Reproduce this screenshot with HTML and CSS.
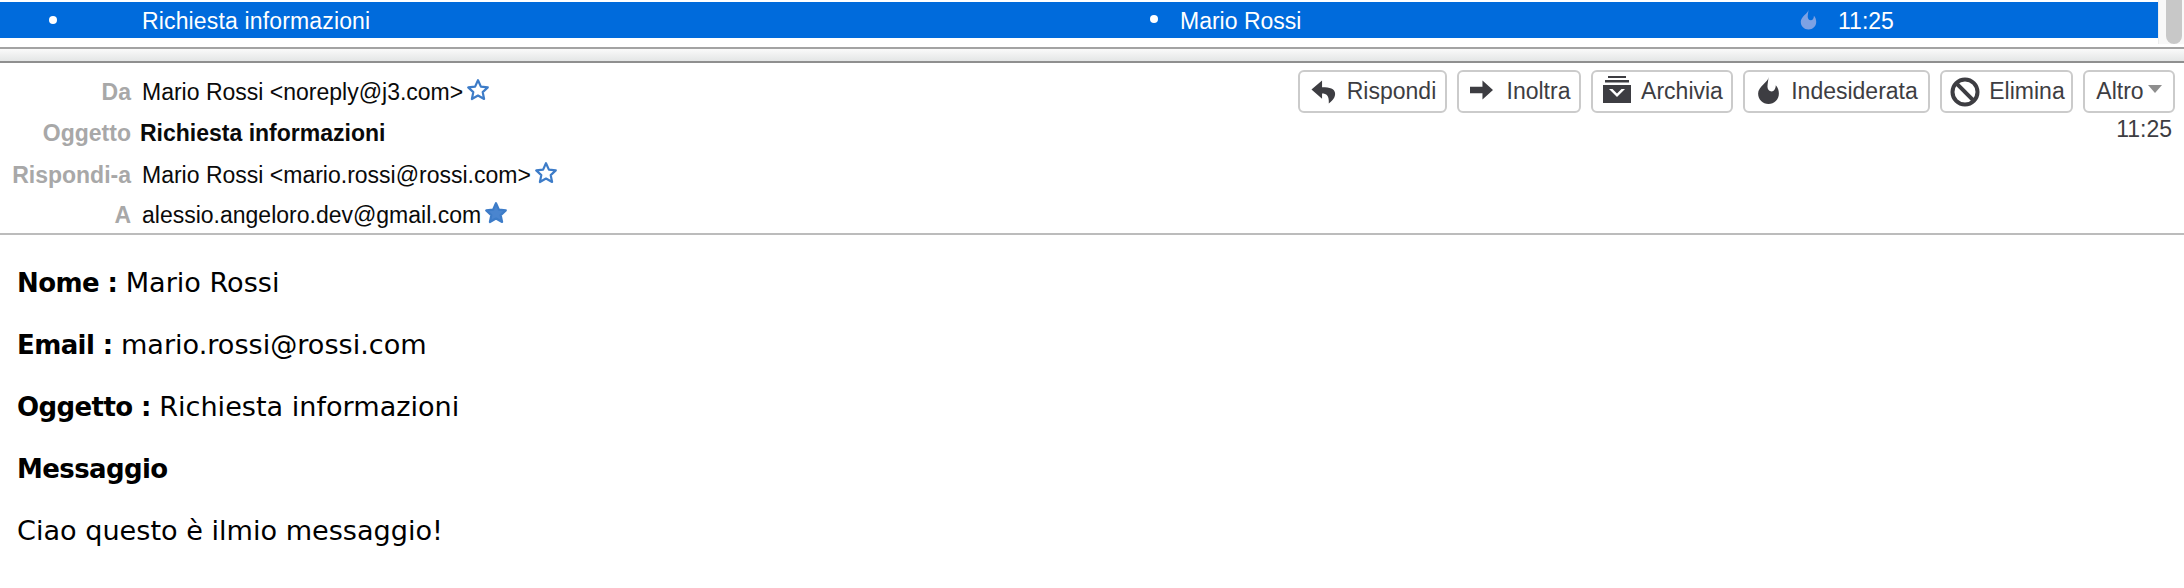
FILE: index.html
```html
<!DOCTYPE html>
<html lang="it">
<head>
<meta charset="utf-8">
<title>Richiesta informazioni</title>
<link rel="stylesheet" href="styles.css">
</head>
<body>
<svg class="defs" width="0" height="0" aria-hidden="true">
  <defs>
    <path id="star" d="M12 2.200l2.900 6.400 6.900.8-5.100 4.700 1.400 6.900-6.100-3.500-6.100 3.500 1.400-6.900L2.200 9.400l6.900-.8z"/>
    <path id="flame" d="M11 0C11 5 1 9 1 16c0 6 4.500 10 10 10s10-4 10-10c0-3-1-6-3-8 0 3-1.500 6-4 6-2.500 0-4-2-4-4.500C10 6 11 3 11 0z"/>
  </defs>
</svg>
<section class="list">
  <div class="thread">
    <span class="dot"></span>
    <span class="subject">Richiesta informazioni</span>
    <span class="dot"></span>
    <span class="sender">Mario Rossi</span>
    <svg class="thread-flame" viewBox="0 0 22 26"><use href="#flame"/></svg>
    <span class="thread-time">11:25</span>
  </div>
  <div class="scrolltrack"><div class="scrollthumb"></div></div>
</section>
<div class="splitter"></div>
<header class="headers">
  <div class="fields">
    <div class="label">Da</div>
    <div class="value">Mario Rossi &lt;noreply@j3.com&gt;<svg class="star" viewBox="0 0 24 24"><use href="#star"/></svg></div>
    <div class="label">Oggetto</div>
    <div class="value subject-value">Richiesta informazioni</div>
    <div class="label">Rispondi-a</div>
    <div class="value">Mario Rossi &lt;mario.rossi@rossi.com&gt;<svg class="star" viewBox="0 0 24 24"><use href="#star"/></svg></div>
    <div class="label">A</div>
    <div class="value">alessio.angeloro.dev@gmail.com<svg class="star filled" viewBox="0 0 24 24"><use href="#star"/></svg></div>
  </div>
  <div class="actions">
    <div class="toolbar">
      <button class="btn btn-reply"><svg class="ico" viewBox="0 0 26 26"><path d="M11.500 1.500L.5 11l11 9.500v-5.500c4.500 0 7.500 2 7 10.500 4.500-3.500 7-7 6.500-11-.6-4.500-5-6-13.500-6z"/></svg>Rispondi</button>
      <button class="btn btn-forward"><svg class="ico ico-forward" viewBox="0 0 24 20"><path d="M13 0l11 10-11 10v-6.500H0v-7h13z"/></svg>Inoltra</button>
      <button class="btn btn-archive"><svg class="ico ico-archive" viewBox="0 0 28 27"><path fill-rule="evenodd" d="M5 0h18v2H5zM2 4h24v2.500H2zM0 9h28v18H0zM6 13l8 8 8-8-3.500 0-4.500 4.500L9.500 13z"/></svg>Archivia</button>
      <button class="btn btn-junk"><svg class="ico ico-junk" viewBox="0 0 22 26"><use href="#flame"/></svg>Indesiderata</button>
      <button class="btn btn-delete"><svg class="ico ico-delete" viewBox="0 0 30 30"><circle cx="15" cy="15" r="12.500"/><path d="M6.200 6.200l17.600 17.600"/></svg>Elimina</button>
      <button class="btn btn-more">Altro<span class="caret"></span></button>
    </div>
    <div class="header-time">11:25</div>
  </div>
</header>
<main class="message">
  <p><b>Nome : </b>Mario Rossi</p>
  <p><b>Email : </b>mario.rossi@rossi.com</p>
  <p><b>Oggetto : </b>Richiesta informazioni</p>
  <p><b>Messaggio</b></p>
  <p>Ciao questo è ilmio messaggio!</p>
</main>
</body>
</html>
```
FILE: styles.css
```css
* { box-sizing: border-box; }
html, body { margin: 0; padding: 0; height: 100%; background: #fff; overflow: hidden; }
body { font-family: "Liberation Sans", Arial, sans-serif; font-size: 23px; color: #0a0a0a; }
.defs { display: block; height: 0; }

.list { display: flex; height: 47px; }
.thread {
  flex: 1;
  height: 36px;
  margin-top: 2px;
  padding-top: 3px;
  background: #006bdc;
  color: #fff;
  display: grid;
  grid-template-columns: 142px 1008px 30px 620px 38px 1fr;
  align-items: center;
}
.subject { letter-spacing: 0.150px; }
.dot { width: 8px; height: 8px; border-radius: 50%; background: #fff; justify-self: start; margin-left: 49px; margin-top: -4px; }
.thread .dot:nth-of-type(3) { margin-left: 0; margin-top: -6px; }
.thread-flame { width: 17px; height: 21px; fill: #7da2e4; margin-top: -4px; }
.scrolltrack { width: 26px; background: #f8f8f8; border-left: 1px solid #ececec; padding-left: 7px; height: 44px; }
.scrollthumb { width: 16px; height: 44px; background: #c8c8c8; border-radius: 0 0 8px 8px; }

.splitter {
  height: 16px;
  border-top: 2px solid #a3a3a3;
  border-bottom: 2px solid #8f8f8f;
  background: linear-gradient(#fafafa, #e4e6e6);
}

.headers {
  display: flex;
  justify-content: space-between;
  height: 172px;
  border-bottom: 2px solid #bcbcbc;
}
.fields {
  display: grid;
  grid-template-columns: 131px 1fr;
  grid-template-rows: 42px 40px 44px 36px;
  column-gap: 11px;
  padding-top: 8px;
  align-items: center;
}
.label { text-align: right; font-weight: 700; color: #a8a8a8; }
.value { display: flex; align-items: center; white-space: nowrap; }
.subject-value { font-weight: 700; margin-left: -2px; }
.star { width: 24px; height: 24px; margin-left: 3px; margin-top: -5px; fill: #fff; stroke: #3d7cc8; stroke-width: 2.200; stroke-linejoin: round; }
.star.filled { fill: #4a85cf; }

.actions { display: flex; flex-direction: column; align-items: flex-end; padding: 7px 9px 0 0; }
.toolbar { display: flex; gap: 10px; }
.btn {
  display: flex;
  align-items: center;
  justify-content: center;
  gap: 11px;
  height: 43px;
  padding: 0 0 0 2px;
  border: 2px solid #cbcbcb;
  border-radius: 6px;
  background: #fff;
  color: #3d3d42;
  font: inherit;
  white-space: nowrap;
}
.btn-reply { width: 149px; }
.btn-forward { width: 124px; }
.btn-archive { width: 142px; gap: 10px; }
.btn-junk { width: 187px; }
.btn-delete { width: 133px; gap: 9px; }
.btn-more { width: 92px; gap: 4px; padding: 0; }
.ico { width: 25px; height: 25px; fill: #3d3d42; flex: none; }
.ico-forward { width: 23px; height: 20px; margin-top: -4px; margin-right: 3px; }
.ico-archive { width: 28px; height: 27px; margin-top: -4px; }
.ico-junk { width: 23px; height: 27px; margin-top: -2px; }
.ico-delete { width: 30px; height: 30px; fill: none; stroke: #3d3d42; stroke-width: 4; }
.caret { width: 0; height: 0; border-left: 7px solid transparent; border-right: 7px solid transparent; border-top: 8px solid #8e8e8e; margin-top: -6px; }
.header-time { margin-top: 3px; color: #3d3d42; padding-right: 3px; }

.message { padding: 0 17px; font-family: "DejaVu Sans", Verdana, sans-serif; font-size: 27.100px; line-height: 28px; color: #000; }
.message b { font-size: 26px; letter-spacing: -0.600px; }
.message p { margin: 34px 0; }
```
